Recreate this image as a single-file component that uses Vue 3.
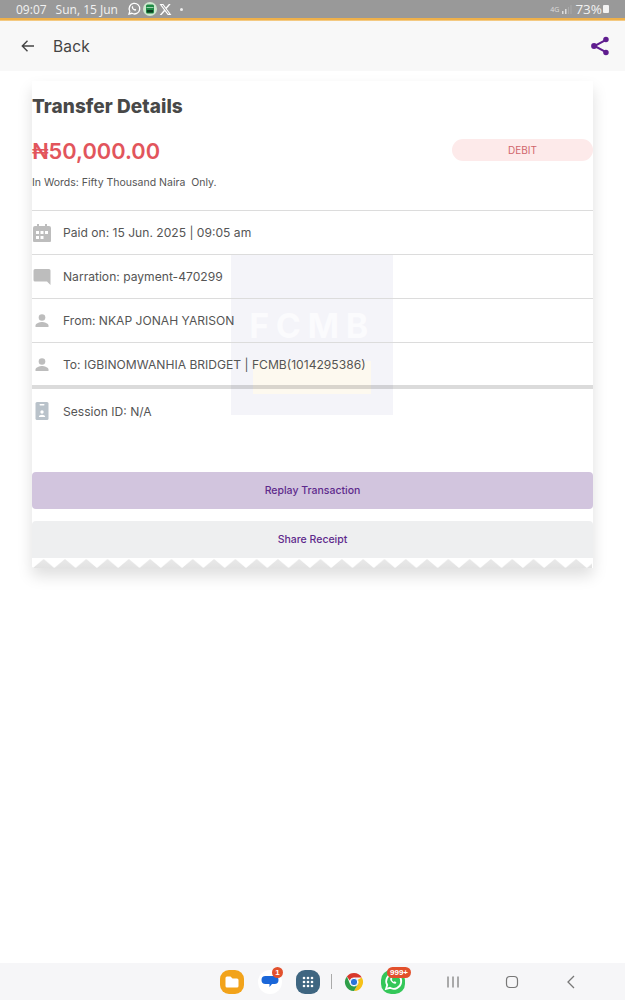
<script setup>
const rows = [
  { icon: 'cal', text: 'Paid on: 15 Jun. 2025 | 09:05 am' },
  { icon: 'chat', text: 'Narration: payment-470299' },
  { icon: 'user', text: 'From: NKAP JONAH YARISON' },
  { icon: 'user', text: 'To: IGBINOMWANHIA BRIDGET | FCMB(1014295386)' },
]
</script>

<template>
  <div class="screen">
    <div class="status">
      <div class="status-left">
        <span class="time">09:07</span>
        <span class="date">Sun, 15 Jun</span>
        <svg class="si" width="14" height="14" viewBox="0 0 14 14"><path d="M2 12l.8-2.800A5.300 5.300 0 1 1 4.900 11.300z" fill="none" stroke="#fff" stroke-width="1.300"/><path d="M5 4.600c-.6.800 0 2 .9 2.900s2.100 1.500 2.900.9l.4-.8-1.200-.8-.6.500c-.6-.3-1.200-.9-1.500-1.500l.5-.6-.8-1.200z" fill="#fff"/></svg>
        <svg class="si" width="14" height="14" viewBox="0 0 14 14"><circle cx="7" cy="7" r="7" fill="#cfe9cf"/><rect x="3" y="2.500" width="8" height="9" rx="1.500" fill="#1f8a45"/><rect x="3.500" y="5.200" width="7" height=".8" fill="#bfe6c8"/><rect x="4" y="8" width="6" height="2.500" fill="#0d4020"/></svg>
        <svg class="si" width="13" height="13" viewBox="0 0 24 24"><path d="M18.200 2h3.400l-7.400 8.500L23 22h-6.800l-5.400-7-6.100 7H1.300l7.900-9.100L.9 2h7l4.800 6.400zm-1.200 18h1.900L6.800 3.900H4.800z" fill="#fff"/></svg>
        <span class="dot"></span>
      </div>
      <div class="status-right">
        <span class="net">4G</span>
        <svg width="10" height="9" viewBox="0 0 10 9"><rect x="0" y="6" width="1.500" height="3" fill="#ddd"/><rect x="3" y="4" width="1.500" height="5" fill="#ddd"/><rect x="6" y="2" width="1" height="7" fill="#aaa"/><rect x="8.500" y="0" width="1" height="9" fill="#aaa"/></svg>
        <span class="pct">73%</span>
        <span class="batt"></span>
      </div>
    </div>
    <div class="accent"></div>

    <header class="topbar">
      <div class="back">
        <svg width="16" height="16" viewBox="0 0 16 16"><path d="M14 8H2.500M7.500 2.800L2.300 8l5.200 5.200" fill="none" stroke="#444" stroke-width="1.400"/></svg>
        <span>Back</span>
      </div>
      <svg width="22" height="22" viewBox="0 0 24 24"><path d="M18 5.500L6 12l12 6.500" fill="none" stroke="#5f1d8f" stroke-width="2.200"/><circle cx="18.500" cy="5" r="3" fill="#5f1d8f"/><circle cx="5.500" cy="12" r="3.200" fill="#5f1d8f"/><circle cx="18.500" cy="19" r="3" fill="#5f1d8f"/></svg>
    </header>

    <main class="card">
      <div class="watermark">
        <span class="wm-text">FCMB</span>
        <span class="wm-bar"></span>
      </div>
      <h1 class="title">Transfer Details</h1>
      <div class="amount-line">
        <span class="amount">₦50,000.00</span>
        <span class="pill">DEBIT</span>
      </div>
      <p class="words">In Words: Fifty Thousand Naira&nbsp; Only.</p>

      <div class="rows">
        <div v-for="r in rows" :key="r.text" class="row">
          <svg v-if="r.icon === 'cal'" class="ri" width="20" height="20" viewBox="0 0 20 20"><path d="M1 5a2 2 0 0 1 2-2h2V1h2v2h6V1h2v2h2a2 2 0 0 1 2 2v13a1 1 0 0 1-1 1H2a1 1 0 0 1-1-1z" fill="#bdbdbd"/><g fill="#fff"><rect x="4" y="8" width="3" height="3"/><rect x="8.500" y="8" width="3" height="3"/><rect x="13" y="8" width="3" height="3"/><rect x="4" y="13" width="3" height="3"/><rect x="8.500" y="13" width="3" height="3"/></g></svg>
          <svg v-else-if="r.icon === 'chat'" class="ri" width="20" height="20" viewBox="0 0 20 20"><path d="M3 2h14a1.500 1.500 0 0 1 1.500 1.500V18L15 14.500H3A1.500 1.500 0 0 1 1.500 13V3.500A1.500 1.500 0 0 1 3 2z" fill="#bdbdbd"/></svg>
          <svg v-else class="ri" width="20" height="20" viewBox="0 0 20 20"><circle cx="10" cy="6.500" r="3.300" fill="#bdbdbd"/><path d="M3.500 16v-1.500c0-2.300 4.300-3.500 6.500-3.500s6.500 1.200 6.500 3.500V16z" fill="#bdbdbd"/></svg>
          <span>{{ r.text }}</span>
        </div>
      </div>
      <div class="thick"></div>
      <div class="row session">
        <svg class="ri" width="20" height="20" viewBox="0 0 20 20"><rect x="3.500" y="1" width="13" height="18" rx="1.500" fill="#b9c2ca"/><rect x="7.500" y="3" width="5" height="1.500" rx=".7" fill="#fff"/><circle cx="10" cy="11" r="1.700" fill="#fff"/><path d="M6.800 16c0-1.500 1.800-2.300 3.200-2.300s3.200.8 3.200 2.300z" fill="#fff"/></svg>
        <span>Session ID: N/A</span>
      </div>

      <button class="btn replay">Replay Transaction</button>
      <button class="btn share">Share Receipt</button>
      <svg class="zigzag" width="560" height="9">
        <defs>
          <pattern id="zig" width="21.3" height="9" patternUnits="userSpaceOnUse" patternTransform="translate(-9.650 0)">
            <path d="M0 0h21.300L10.650 9z" fill="#fff"/>
          </pattern>
        </defs>
        <rect width="560" height="9" fill="url(#zig)"/>
      </svg>
    </main>

    <div class="spacer"></div>

    <nav class="navbar">
      <div class="apps">
        <svg width="26" height="26" viewBox="0 0 26 26"><rect x="1" y="1" width="24" height="24" rx="9" fill="#f2a31a"/><path d="M6.500 9a1.500 1.500 0 0 1 1.500-1.500h3.500l2 2H18a1.500 1.500 0 0 1 1.500 1.500v6a1.500 1.500 0 0 1-1.500 1.500H8A1.500 1.500 0 0 1 6.500 17z" fill="#fff"/></svg>
        <div class="app msg">
          <svg width="26" height="26" viewBox="0 0 26 26"><circle cx="13" cy="13" r="12" fill="#fff"/><path d="M8.500 7h9a4 4 0 0 1 0 8H15l-2.500 3v-3h-4a4 4 0 0 1 0-8z" fill="#1a66d8"/></svg>
          <span class="badge small">1</span>
        </div>
        <svg width="26" height="26" viewBox="0 0 26 26"><rect x="1" y="1" width="24" height="24" rx="9" fill="#3f6681"/><g fill="#fff"><circle cx="9" cy="9" r="1.300"/><circle cx="13" cy="9" r="1.300"/><circle cx="17" cy="9" r="1.300"/><circle cx="9" cy="13" r="1.300"/><circle cx="13" cy="13" r="1.300"/><circle cx="17" cy="13" r="1.300"/><circle cx="9" cy="17" r="1.300"/><circle cx="13" cy="17" r="1.300"/><circle cx="17" cy="17" r="1.300"/></g></svg>
        <span class="sep"></span>
        <svg width="20" height="20" viewBox="0 0 20 20"><path d="M10 1a9 9 0 0 1 7.800 4.500H10A4.500 4.500 0 0 0 5.800 8.400L2.900 4.400A9 9 0 0 1 10 1z" fill="#d8382c"/><path d="M17.800 5.500A9 9 0 0 1 10 19l3.900-6.700a4.500 4.500 0 0 0 0-4.600z" fill="#f6c119"/><path d="M2.900 4.400L6.100 12.200A4.500 4.500 0 0 0 13.900 12.300L10 19A9 9 0 0 1 2.900 4.400z" fill="#2f9e49"/><circle cx="10" cy="10" r="3.700" fill="#2a73d9" stroke="#fff" stroke-width="1"/></svg>
        <div class="app wa">
          <svg width="26" height="26" viewBox="0 0 26 26"><rect x="1" y="1" width="24" height="24" rx="10" fill="#34c759"/><path d="M6 20l1.200-4A7.500 7.500 0 1 1 10 18.800z" fill="none" stroke="#fff" stroke-width="1.800"/><path d="M10.500 9c-.8 1 0 2.800 1.300 4.100s3 2 4 1.300l.6-1.100-1.800-1.100-.8.700c-.9-.4-1.700-1.200-2.100-2.100l.7-.8L11.300 8.400z" fill="#fff"/></svg>
          <span class="badge wide">999+</span>
        </div>
      </div>
      <div class="sys">
        <svg width="14" height="14" viewBox="0 0 14 14"><path d="M2 1.500v11M7 1.500v11M12 1.500v11" stroke="#777" stroke-width="1.200"/></svg>
        <svg width="14" height="14" viewBox="0 0 14 14"><rect x="1.500" y="1.500" width="11" height="11" rx="3.500" fill="none" stroke="#777" stroke-width="1.200"/></svg>
        <svg width="14" height="14" viewBox="0 0 14 14"><path d="M10 1L4 7l6 6" fill="none" stroke="#777" stroke-width="1.300"/></svg>
      </div>
    </nav>
  </div>
</template>

<style scoped>
.screen {
  width: 625px;
  height: 1000px;
  display: flex;
  flex-direction: column;
  overflow: hidden;
  background: #fff;
  font-family: Inter, "Liberation Sans", sans-serif;
  color: #555;
}
.status {
  height: 18px;
  flex: none;
  background: #999;
  color: #f2f2f2;
  display: flex;
  justify-content: space-between;
  align-items: center;
  padding: 0 16px 0 16px;
  box-sizing: border-box;
  font-family: "Open Sans", "Liberation Sans", sans-serif;
  font-size: 12px;
}
.status-left, .status-right { display: flex; align-items: center; }
.date { margin-left: 9px; margin-right: 9px; }
.si { margin-right: 2px; }
.dot { width: 3px; height: 3px; border-radius: 50%; background: #eee; margin-left: 6px; }
.net { font-size: 7px; color: #ddd; margin-right: 3px; }
.pct { font-size: 13.500px; margin-left: 3px; }
.batt { width: 6px; height: 8px; background: #f2f2f2; border-radius: 1px; margin-left: 1px; }
.accent { height: 3px; flex: none; background: linear-gradient(#eeb04a 70%, #fbe9c8); }
.topbar {
  height: 50px;
  flex: none;
  background: #f8f8f8;
  display: flex;
  justify-content: space-between;
  align-items: center;
  padding: 0 14px 0 20px;
  box-sizing: border-box;
}
.back { display: flex; align-items: center; gap: 17px; font-size: 15.500px; color: #444; letter-spacing: .2px; }
.card {
  position: relative;
  flex: none;
  margin: 10px 32px 0;
  height: 487px;
  box-sizing: border-box;
  padding-top: 16px;
  background: #fff;
  box-shadow: 0 8px 14px rgba(0, 0, 0, .13);
}
.watermark {
  position: absolute;
  left: 199px;
  top: 173px;
  width: 162px;
  height: 161px;
  background: #f4f4f9;
  display: flex;
  flex-direction: column;
  align-items: center;
}
.wm-text {
  margin-top: 52px;
  font-size: 34px;
  font-weight: 700;
  letter-spacing: 6.500px;
  color: #fbfbfd;
  line-height: 40px;
}
.wm-bar { margin-top: 15px; width: 118px; height: 33px; background: #fdf9ef; }
.title {
  position: relative;
  margin: 0;
  font-size: 19px;
  line-height: 20px;
  font-weight: 800;
  letter-spacing: .06px;
  color: #484848;
}
.amount-line {
  position: relative;
  display: flex;
  justify-content: space-between;
  align-items: center;
  margin-top: 22px;
  height: 24px;
}
.amount { font-size: 21.800px; font-weight: 600; color: #e2555c; font-family: Inter, "DejaVu Sans", sans-serif; }
.pill {
  width: 141px;
  height: 22px;
  margin-top: -2px;
  border-radius: 11px;
  background: #fdeaea;
  color: #d0666c;
  font-size: 10px;
  display: flex;
  align-items: center;
  justify-content: center;
}
.words { position: relative; margin: 13px 0 0; font-size: 10.500px; line-height: 14px; color: #555; }
.rows { position: relative; margin-top: 20px; }
.row {
  position: relative;
  height: 44px;
  box-sizing: border-box;
  border-top: 1px solid #dcdcdc;
  display: flex;
  align-items: center;
  gap: 11px;
  font-size: 12.100px;
  color: #555;
}
.ri { flex: none; }
.thick { position: relative; height: 4px; margin-top: -1px; background: rgba(0, 0, 0, .14); }
.session { border-top: 0; }
.btn {
  display: block;
  position: relative;
  width: 100%;
  height: 37px;
  border: 0;
  border-radius: 4px;
  font-family: inherit;
  font-size: 10.500px;
  font-weight: 500;
  color: #5e2a8c;
}
.replay { margin-top: 39px; background: #d2c5de; }
.share { margin-top: 12px; background: #eeeff0; border-radius: 4px 4px 0 0; }
.zigzag {
  position: absolute;
  left: 0;
  bottom: 0;
  display: block;
  background: linear-gradient(#e9e9e9, #e2e2e2);
}
.spacer { flex: 1; }
.navbar {
  height: 37px;
  flex: none;
  background: #f6f6f8;
  display: flex;
  align-items: center;
  position: relative;
  padding-left: 219px;
}
.apps { display: flex; align-items: center; gap: 12px; }
.app { position: relative; height: 26px; }
.wa { margin-left: 4px; }
.badge {
  position: absolute;
  background: #e2502c;
  color: #fff;
  font-family: "Liberation Sans", sans-serif;
  font-weight: 700;
  font-size: 8px;
  line-height: 11px;
  height: 11px;
  border-radius: 6px;
  text-align: center;
}
.small { width: 11px; right: 0; top: -2px; }
.wide { width: 24px; left: 7px; top: -2px; }
.sep { width: 1px; height: 15px; background: #aaa; margin: 0 0 0 -2px; }
.sys { display: flex; gap: 45px; margin-left: 40px; align-items: center; }
</style>
